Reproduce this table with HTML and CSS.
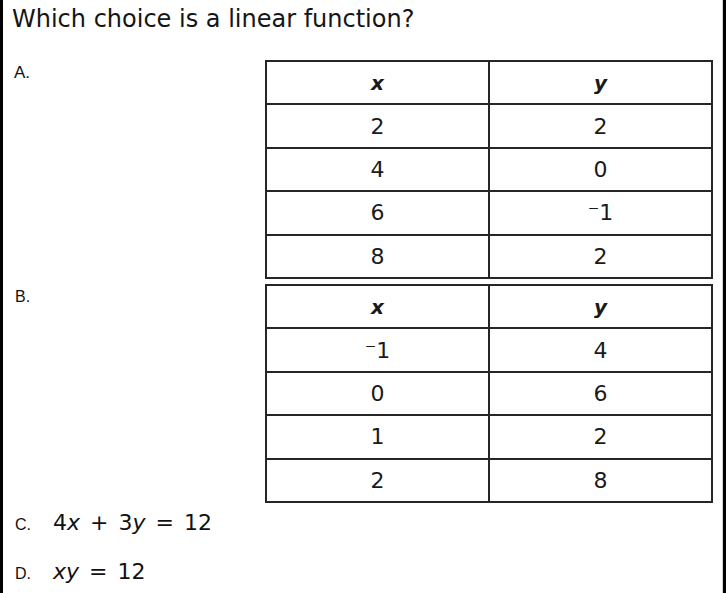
FILE: index.html
```html
<!DOCTYPE html>
<html>
<head>
<meta charset="utf-8">
<link rel="stylesheet" href="styles.css">
</head>
<body>
<div class="page">
  <h1 class="question">Which choice is a linear function?</h1>

  <div class="choice choice-a">
    <span class="label">A.</span>
    <table class="values">
      <tr><th>x</th><th>y</th></tr>
      <tr><td>2</td><td>2</td></tr>
      <tr><td>4</td><td>0</td></tr>
      <tr><td>6</td><td><span class="neg">⁻</span>1</td></tr>
      <tr><td>8</td><td>2</td></tr>
    </table>
  </div>

  <div class="choice choice-b">
    <span class="label">B.</span>
    <table class="values">
      <tr><th>x</th><th>y</th></tr>
      <tr><td><span class="neg">⁻</span>1</td><td>4</td></tr>
      <tr><td>0</td><td>6</td></tr>
      <tr><td>1</td><td>2</td></tr>
      <tr><td>2</td><td>8</td></tr>
    </table>
  </div>

  <div class="eq-choice eq-c">
    <span class="eq-label">C.</span>
    <span class="expr">4<i>x</i> + 3<i>y</i> = 12</span>
  </div>

  <div class="eq-choice eq-d">
    <span class="eq-label">D.</span>
    <span class="expr"><i>xy</i> = 12</span>
  </div>
</div>
</body>
</html>
```

FILE: styles.css
```css
html, body {
  margin: 0;
  padding: 0;
  background: #fff;
}

.page {
  box-sizing: border-box;
  width: 726px;
  height: 593px;
  border-left: 3px solid #000;
  border-right: 3px solid #000;
  box-shadow: inset -1px 0 0 #d4d4d4;
  background: #fff;
  color: #111;
  overflow: hidden;
}

.question {
  margin: 4px 0 0 9px;
  font-family: "DejaVu Sans", Verdana, sans-serif;
  font-weight: normal;
  font-size: 24px;
  line-height: 30px;
  color: #151515;
}

.choice {
  display: grid;
  grid-template-columns: 262px 448px;
  align-items: start;
}

.choice-a {
  margin-top: 26px;
}

.choice-b {
  margin-top: 5px;
}

.label {
  font-family: "Liberation Sans", Arial, sans-serif;
  font-size: 17px;
  line-height: 20px;
  padding-left: 11px;
  padding-top: 3px;
  color: #111;
}

.choice-b .label {
  padding-left: 12px;
  padding-top: 3px;
  font-size: 16px;
}

.values {
  border-collapse: collapse;
  width: 448px;
  table-layout: fixed;
  font-family: "DejaVu Sans", Verdana, sans-serif;
  font-size: 22px;
  color: #1a1a1a;
}

.values th,
.values td {
  border: 2px solid #262626;
  height: 41.4px;
  padding: 0;
  text-align: center;
  vertical-align: middle;
}

.values th {
  font-weight: bold;
  font-style: italic;
  font-size: 20px;
}

.neg {
  font-size: 22px;
}

.eq-choice {
  display: flex;
  align-items: baseline;
  padding-left: 12px;
}

.eq-c {
  margin-top: 6px;
}

.eq-d {
  margin-top: 21px;
}

.eq-label {
  width: 38px;
  font-family: "Liberation Sans", Arial, sans-serif;
  font-size: 16px;
  color: #111;
}

.expr {
  font-family: "DejaVu Sans", Verdana, sans-serif;
  font-size: 22px;
  line-height: 28px;
  word-spacing: 3px;
  color: #111;
}

.expr i {
  font-style: italic;
}
```
